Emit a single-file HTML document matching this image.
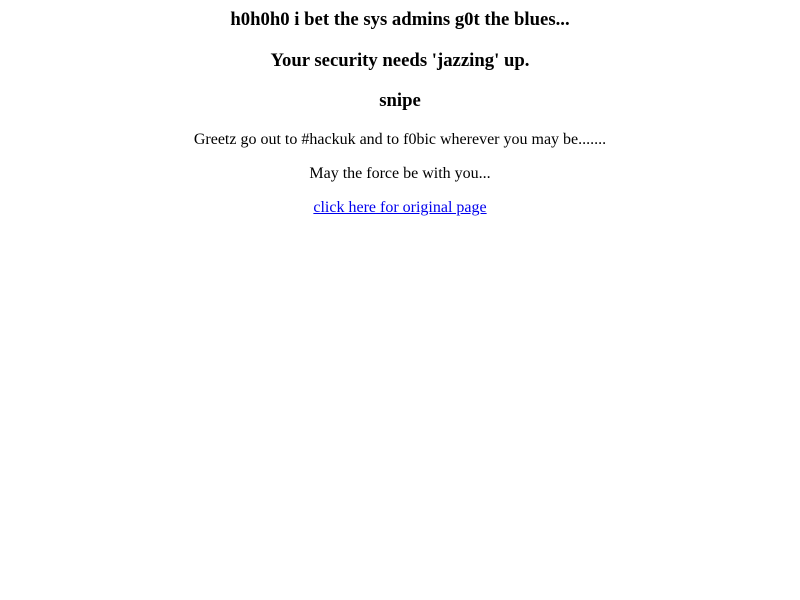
<!DOCTYPE html>
<html><head><meta charset="utf-8"><style>
body{margin:9px 8px 8px;background:#fff;color:#000;font-family:"Liberation Serif",serif;text-align:center}
h3{font-size:18.72px;margin:18.72px 0}
h3.first{margin-top:0}
p{font-size:16px;margin:16px 0}
a{color:#0000ee}
</style></head><body>
<h3 class="first">h0h0h0 i bet the sys admins g0t the blues...</h3>
<h3>Your security needs 'jazzing' up.</h3>
<h3>snipe</h3>
<p>Greetz go out to #hackuk and to f0bic wherever you may be.......</p>
<p>May the force be with you...</p>
<p><a href="#">click here for original page</a></p>
</body></html>
